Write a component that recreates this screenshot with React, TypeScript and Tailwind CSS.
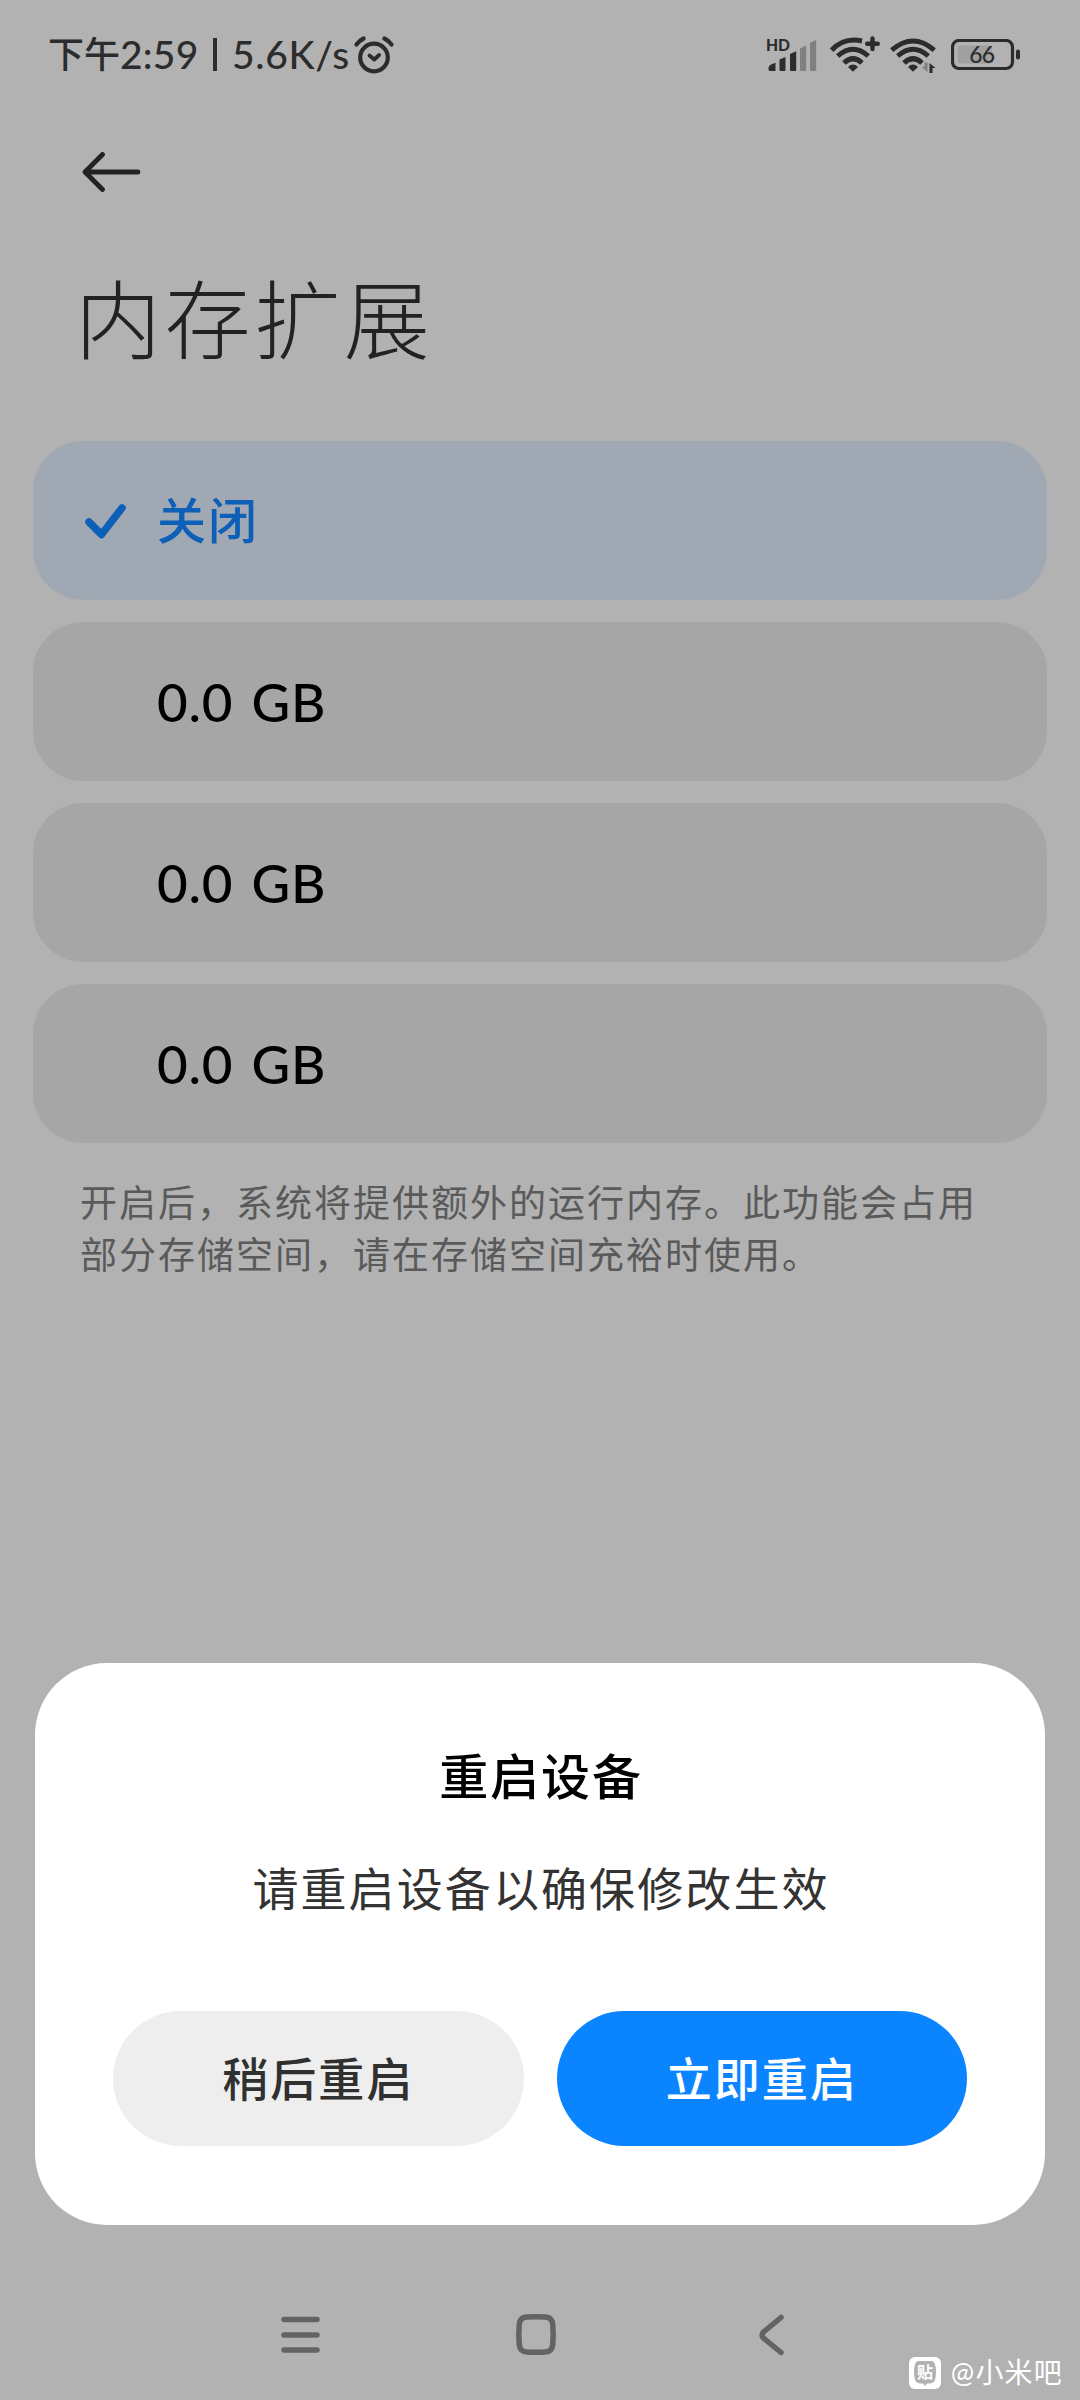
import React, { useState } from 'react';

const OPTIONS = ['关闭', '0.0 GB', '0.0 GB', '0.0 GB'];

const AlarmIcon = () => (
  <svg width="42" height="40" viewBox="0 0 42 40" fill="none" stroke="#2c2c2c" strokeLinecap="round">
    <circle cx="20" cy="22.500" r="13.800" strokeWidth="4.200" />
    <path d="M15.500 20.500l4.800 4 4.800-4.500" strokeWidth="3.800" strokeLinejoin="round" />
    <path d="M2.500 9.500Q5.500 5.500 9.500 3.500M30.500 3.500Q34.500 5.500 37.500 9.500" strokeWidth="4.200" />
  </svg>
);

const SignalIcon = () => (
  <svg width="52" height="38" viewBox="0 0 52 38" fill="#2c2c2c">
    <text x="0" y="15.500" fontSize="17" fontWeight="900" textLength="24" lengthAdjust="spacingAndGlyphs" className="font-['Lato',sans-serif]">HD</text>
    <path d="M2.500 33q0-2.500 2.500-3.500l4.500-1.700V36H4.500Q2.500 36 2.500 34.500z" />
    <path d="M13.500 24.500l6-2.500v13q0 1-1 1H14.500q-1 0-1-1z" />
    <path d="M24 19l6.200-2.800V35q0 1-1 1H25q-1 0-1-1z" />
    <path d="M34 13.500l6.200-3.200V35q0 1-1 1H35q-1 0-1-1z" fill="#808080" />
    <path d="M44 8l6.200-3.300V35q0 1-1 1H45q-1 0-1-1z" fill="#808080" />
  </svg>
);

const WifiPlusIcon = () => (
  <svg width="50" height="38" viewBox="0 0 50 38" fill="none" stroke="#2c2c2c" strokeWidth="5">
    <path d="M1.700 15.200Q14 2 32 6" />
    <path d="M7.700 21Q23 7.500 38.300 21" />
    <path d="M14 28Q23 19.500 32 28" />
    <path d="M18 32q5-4.800 10 0l-5 4.800z" fill="#2c2c2c" stroke="none" />
    <path d="M42.500 3.500v10.500M37.200 8.800h10.600" strokeWidth="4.400" strokeLinecap="round" />
  </svg>
);

const WifiDataIcon = () => (
  <svg width="48" height="38" viewBox="0 0 48 38" fill="none" stroke="#2c2c2c" strokeWidth="5">
    <path d="M1.700 15.200Q23-3.200 44.300 15.200" />
    <path d="M7.700 21Q23 7.500 38.300 21" />
    <path d="M14 28Q23 19.500 32 28" />
    <path d="M18 32q5-4.800 10 0l-5 4.800z" fill="#2c2c2c" stroke="none" />
    <path d="M37.500 27.500v9.500l-6-5h3v-4.500z" fill="#808080" stroke="none" />
    <path d="M39.500 38v-10l6 5h-3v5z" fill="#2c2c2c" stroke="none" />
  </svg>
);

const BatteryIcon = () => (
  <svg width="70" height="32" viewBox="0 0 70 32" fill="none">
    <rect x="1.500" y="1.500" width="60" height="28" rx="6.500" stroke="#2c2c2c" strokeWidth="3.200" />
    <rect x="7" y="6.500" width="34" height="18" rx="2" fill="#a0a0a0" />
    <rect x="65" y="10.500" width="4" height="10" rx="2" fill="#2c2c2c" />
    <text x="31.200" y="24" textAnchor="middle" fontSize="23" fontWeight="500" fill="#2c2c2c" textLength="26" className="font-['Lato',sans-serif]">66</text>
  </svg>
);

const StatusBar = () => (
  <div className="flex h-[108px] shrink-0 items-start pl-[48px] pt-[35px] text-[#2c2c2c]">
    <div className="mt-[-5px] flex h-12 w-[306px] items-center whitespace-nowrap text-[37px] font-medium leading-[48px]">
      <span className="w-[72px] text-[36px]">下午</span>
      <span className="w-[93px] text-[39px] tracking-[0.200px]">2:59</span>
      <span className="mr-[15px] h-[33px] w-[4px] bg-[#2c2c2c]" />
      <span className="text-[39px] tracking-[0.700px]">5.6K/s</span>
    </div>
    <AlarmIcon />
    <div className="ml-[370px] flex items-start">
      <SignalIcon />
      <div className="ml-[12px]"><WifiPlusIcon /></div>
      <div className="ml-[10px]"><WifiDataIcon /></div>
      <div className="ml-[13px] mt-[4px]"><BatteryIcon /></div>
    </div>
  </div>
);

const CheckIcon = () => (
  <svg width="44" height="36" viewBox="0 0 44 36" fill="none" stroke="#0d5fb8" strokeWidth="7.500" strokeLinecap="round" strokeLinejoin="round">
    <path d="M6 19L18.500 31.500 39 5" />
  </svg>
);

export default function App() {
  const [selected, setSelected] = useState(0);

  return (
    <div className="relative flex h-[2400px] w-[1080px] flex-col overflow-hidden bg-[#b2b2b2] font-['Lato','Noto_Sans_CJK_SC',sans-serif]">
      <StatusBar />

      {/* Header */}
      <button className="ml-[82px] mt-[44px] h-[40px] w-[60px] shrink-0">
        <svg width="60" height="40" viewBox="0 0 60 40" fill="none" stroke="#222" strokeWidth="4.800" strokeLinecap="round" strokeLinejoin="round">
          <path d="M20.500 2.500L3 20l17.500 17.500M3 20h53" />
        </svg>
      </button>
      <h1 className="ml-[75px] mt-[68px] h-[120px] shrink-0 text-[86px] font-light leading-[120px] tracking-[3.600px] text-[#222]">内存扩展</h1>

      {/* Memory size options */}
      <div className="mx-[33px] mt-[61px] flex flex-col gap-[22px]">
        {OPTIONS.map((label, i) => (
          <button
            key={i}
            onClick={() => setSelected(i)}
            className={`flex h-[159px] items-center rounded-[50px] pl-[50px] text-left font-medium ${
              selected === i ? 'bg-[#a0a9b3] text-[#0d5fb8]' : 'bg-[#a6a6a6] text-black'
            }`}
          >
            <span className="w-[74px]">{selected === i && <CheckIcon />}</span>
            <span className={i === 0 ? 'text-[49px] tracking-[2px]' : 'text-[53px] tracking-[0.800px] [word-spacing:4px]'}>{label}</span>
          </button>
        ))}
      </div>
      <p className="ml-[80px] mt-[34px] h-[104px] whitespace-nowrap text-[37px] leading-[52px] tracking-[2px] text-[#5a5a5a]">
        开启后，系统将提供额外的运行内存。此功能会占用
        <br />
        部分存储空间，请在存储空间充裕时使用。
      </p>

      {/* Restart dialog */}
      <div className="mx-[35px] mt-auto flex h-[562px] shrink-0 flex-col items-center rounded-[72px] bg-white pt-[78px]">
        <h2 className="h-[70px] pl-[2px] text-[49px] font-medium leading-[70px] tracking-[1.900px] text-black">重启设备</h2>
        <p className="mt-[43px] h-[70px] pl-[2px] text-[46px] leading-[70px] tracking-[2.100px] text-[#333]">请重启设备以确保修改生效</p>
        <div className="mt-[87px] flex w-[854px] gap-[33px] text-[46px] font-medium tracking-[2px]">
          <button className="h-[135px] flex-1 rounded-full bg-[#eeeeee] text-[#303030]">稍后重启</button>
          <button className="h-[135px] flex-1 rounded-full bg-[#0b84ff] text-white">立即重启</button>
        </div>
      </div>

      {/* Navigation bar */}
      <div className="mt-[87px] flex h-[88px] shrink-0 pl-[278px]">
        <svg width="520" height="46" viewBox="0 0 520 46" fill="none" stroke="#636363" strokeWidth="5.500" strokeLinecap="round" strokeLinejoin="round">
          <path d="M6 7.500h33M6 23h33M6 38h33" />
          <path d="M248.500 5q9.500-.600 19 0 6.500.500 7.200 7 1 10.500 0 21-.7 6.500-7.200 7-9.500.600-19 0-6.500-.500-7.200-7-1-10.500 0-21 .7-6.500 7.200-7z" />
          <path d="M503 5.500l-17.500 14.500q-3 3 0 6L503 40.500" />
        </svg>
      </div>

      {/* Watermark */}
      <div className="absolute bottom-[8px] right-[17px] flex items-center gap-[10px] text-white">
        <svg width="32" height="32" viewBox="0 0 32 32">
          <rect width="32" height="32" rx="6" fill="#fff" />
          <path d="M9 4h14q4 1 4 11t-4 11q-3 .500-5 .500l-2 2.500-2-2.500q-2 0-5-.500-4-1-4-11T9 4z" fill="#b2b2b2" />
          <text x="16" y="21" textAnchor="middle" fontSize="16" fontWeight="700" fill="#fff" className="font-['Noto_Sans_CJK_SC',sans-serif]">贴</text>
        </svg>
        <span className="mt-[-2px] text-[28px] leading-[40px] tracking-[1.200px]">@小米吧</span>
      </div>
    </div>
  );
}
